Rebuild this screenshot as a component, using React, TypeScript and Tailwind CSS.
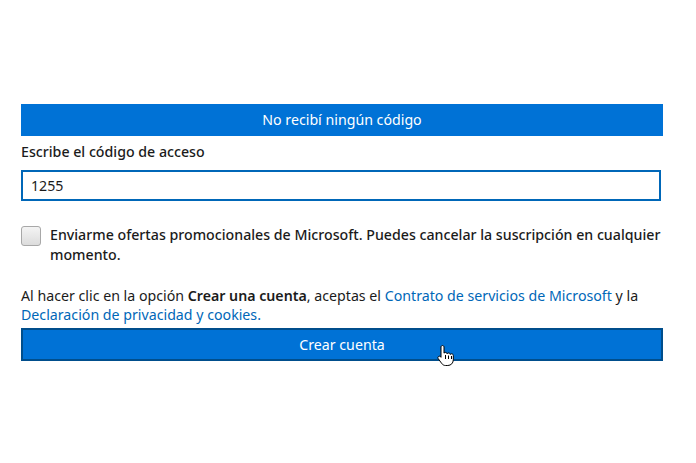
import React from "react";

function HandCursor() {
  return (
    <svg width="18" height="22" viewBox="0 0 18 22" className="absolute left-[437px] top-[344px]">
      <path
        d="M5.5 1.5c.8 0 1.5.7 1.5 1.5v6.2c.3-.5.9-.8 1.5-.8.9 0 1.5.6 1.6 1.4.3-.5.9-.8 1.5-.8.9 0 1.5.6 1.6 1.5.3-.4.8-.7 1.4-.7 1 0 1.7.8 1.7 1.7v4.3c0 3.2-2.3 5.7-5.5 5.7H8.6c-1.8 0-3-.8-4-2.2L1.2 14.6c-.5-.7-.4-1.6.3-2.1.7-.5 1.6-.4 2.1.2L4 13.3V3c0-.8.7-1.5 1.5-1.5z"
        fill="#fff"
        stroke="#000"
        strokeWidth="1"
        strokeLinejoin="round"
      />
      <path d="M8.5 11v4M11.5 11.5v3.5M14.5 12v3" stroke="#000" strokeWidth="1" />
    </svg>
  );
}

export default function App() {
  return (
    <div
      className="relative w-[696px] h-[463px] bg-white text-[#1b1b1b]"
      style={{ fontFamily: '"Noto Sans", "Open Sans", sans-serif' }}
    >
      <div className="pt-[104px] px-[21px] w-[684px] flex flex-col">
        <button className="h-[32px] w-[642px] bg-[#0072d6] text-white text-[14.2px] leading-[32px] text-center">
          No recibí ningún código
        </button>
        <div className="mt-[6px] text-[14.2px] leading-[20px] font-medium">Escribe el código de acceso</div>
        <div className="mt-[8px] h-[31px] w-[640px] border-2 border-[#0067b8] flex items-center px-[8px] text-[14.2px]">
          1255
        </div>
        <div className="mt-[24px] flex gap-[9px]">
          <div className="mt-[1px] w-[20px] h-[20px] shrink-0 rounded-[3px] border border-[#a8a8a8] bg-gradient-to-b from-[#f4f4f4] to-[#dcdcdc]" />
          <div className="text-[14.2px] leading-[20px] font-medium text-[#1b1b1b]">
            Enviarme ofertas promocionales de Microsoft. Puedes cancelar la suscripción en cualquier momento.
          </div>
        </div>
        <div className="mt-[21px] text-[14.2px] leading-[19px] text-[#1b1b1b]">
          Al hacer clic en la opción <span className="font-semibold">Crear una cuenta</span>, aceptas el{" "}
          <span className="text-[#0067b8]">Contrato de servicios de Microsoft</span> y la{" "}
          <span className="text-[#0067b8]">Declaración de privacidad y cookies.</span>
        </div>
        <button className="mt-[4px] h-[33px] w-[642px] bg-[#0072d6] border-2 border-[#004e8c] text-white text-[14.2px] text-center">
          Crear cuenta
        </button>
      </div>
      <HandCursor />
    </div>
  );
}
